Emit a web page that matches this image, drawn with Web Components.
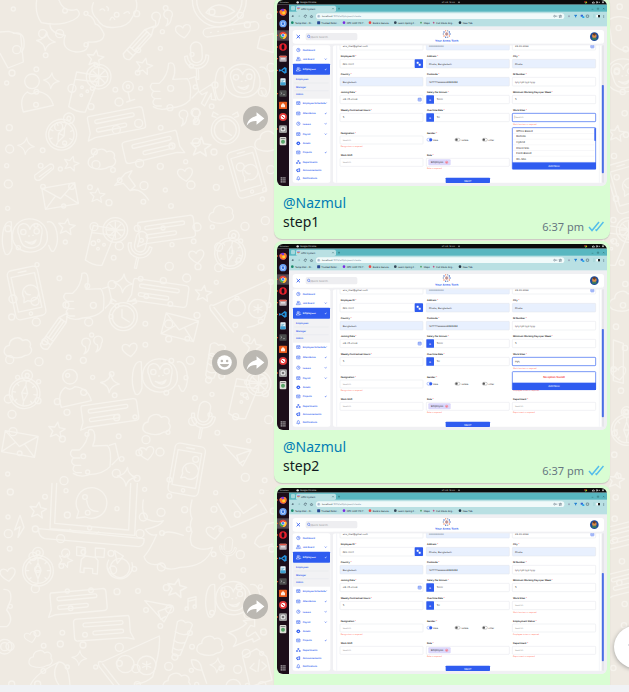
<!DOCTYPE html>
<html lang="en">
<head>
<meta charset="utf-8">
<meta name="viewport" content="width=device-width, initial-scale=1">
<title>Chat</title>
<style>
html, body { margin: 0; height: 100%; }
body { font-family: "Noto Sans", "Open Sans", sans-serif; color: #111b21; background: #efeae2; overflow: hidden; }
</style>
</head>
<body>
<chat-window>
  <chat-message time="6:37 pm" mention="@Nazmul" state="list">step1</chat-message>
  <chat-message time="6:37 pm" mention="@Nazmul" state="none" react>step2</chat-message>
  <chat-message mention="@Nazmul" state="closed"></chat-message>
</chat-window>

<script>
/* Wallpaper with line doodles */
class ChatWallpaper extends HTMLElement {
  constructor() {
    super();
    const C = (x, y, r) => `<circle cx="${x}" cy="${y}" r="${r}"/>`;
    const P = (d, x = 0, y = 0, r = 0, s = 1) => `<path transform="translate(${x} ${y}) rotate(${r}) scale(${s})" d="${d}"/>`;
    const G = (inner, x, y, r = 0, s = 1) => `<g transform="translate(${x} ${y}) rotate(${r}) scale(${s})">${inner}</g>`;
    const star = (x, y, r = 8, s = 1) => P('M0-24L7-8 25-7 11 5 16 22 0 13-16 22-11 5-25-7-7-8Z', x, y, r, s);
    const spark = (x, y, s = 1) => P('M0-28Q4-5 28 0Q4 5 0 28Q-4 5-28 0Q-4-5 0-28Z', x, y, 5, s);
    const heart = (x, y, r = -8, s = 1) => P('M0 20C-14 10-26 0-22-12C-18-22-4-20 0-10C4-20 18-22 22-12C26 0 14 10 0 20Z', x, y, r, s);
    const cloud = (x, y, s = 1) => P('M-32 28C-48 20-42-2-26-4C-26-26 4-34 14-18C28-26 42-14 36 0C48 12 34 28 22 26C8 36-10 36-32 28Z', x, y, 0, s);
    const quote = (x, y) => P('M-4 0a13 13 0 1 1 12-4c0 16-6 22-16 26c6-8 7-14 4-22M32-6a13 13 0 1 1 12-4c0 16-6 22-16 26c6-8 7-14 4-22', x, y);
    const talk = (x, y, r, f = 1) => `<g transform="translate(${x} ${y}) rotate(${r}) scale(${f} 1)"><path d="M-80-34H74Q84-34 84-24V22Q84 32 74 32H-72L-94 38L-84 16V-24Q-84-34-80-34Z"/><rect x="-64" y="-20" width="120" height="11" rx="5"/><rect x="-64" y="6" width="92" height="11" rx="5"/></g>`;
    const compass = (x, y, r = 0) => G(C(0, 0, 46) + C(0, 0, 38) + C(0, -54, 16) + C(0, -54, 6) + '<path d="M0-24L9 0 0 24-9 0ZM-9 0H9M0-36v8M0 28v8M-36 0h8M28 0h8M-26-26l5 5M21 21l5 5M26-26l-5 5M-21 21l-5 5"/>', x, y, r);
    const mic = (x, y, r = 0, s = 1) => G('<rect x="-17" y="-46" width="34" height="62" rx="17"/><path d="M-36-4C-36 46 36 46 36-4l-8-2C28 34-28 34-28-6ZM-3 34V66h6V34"/>', x, y, r, s);
    const phone = (x, y, r, s = 1) => G('<rect x="-46" y="-76" width="92" height="150" rx="14"/><path d="M-36-56H36V50H-36ZM-12-66H12M-14 26l4-14a24 24 0 1 1 9 10ZM-4-8q2 14 14 14"/>' + C(0, 62, 5), x, y, r, s);
    const thumb = (x, y) => P('M-22 0Q4-22 6-60Q22-66 24-46Q26-28 18-12L62-14Q76 0 70 50Q50 72 8 74Q-20 84-40 70M-22 0H-44Q-56 14-38 24H-20M-40 24Q-52 38-36 46H-18M-36 46Q-48 60-32 68H-16M68-14l18-6 10 44-20 20', x, y);
    const clock = (x, y) => C(x, y, 42) + C(x, y, 33) + P('M-4-22V2L18 16M-28-38l-12-4 4-12 14 8M28-38l12-4-4-12-14 8', x, y);
    const monkey = (x, y) => G('<path d="M-52 18C-62-60 50-64 52 8C58 64-38 76-52 18Z"/><path d="M-36-2C-42-36-4-36 0-12C4-36 42-36 36 0C30 18 40 40 4 44C-32 42-26 18-36-2Z"/><path d="M-14 24Q4 32 18 20Q10 42-14 24M-56-34C-84-44-90 30-74 62Q-62 70-54 44ZM52-34C80-44 92 24 72 52Q64 60 56 36M-4 8h2M8 6h2"/>' + C(-20, -4, 8) + C(20, -6, 8), x, y);
    const drink = (x, y) => G('<path d="M-20-44L50-32 6 76Q-18 78-44 60ZM-24-22L44-14"/>' + C(46, -30, 37) + C(46, -30, 28) + '<path d="M46-54v48M22-30h48M29-47l34 34M63-47l-34 34"/>' + C(-4, 2, 4) + C(12, 14, 4) + C(-6, 26, 4), x, y);
    const pizza = (x, y) => G('<path d="M-88 30Q-96 10-80 16L92-62Q96-20 72 60Q54 78 22 82M-88 30L-40 92M-78 22L-20 96"/>' + C(-10, 22, 26) + C(54, 26, 28) + '<path d="M54 14v24M42 20l24 12M66 20L42 32"/>', x, y);
    const laptop = (x, y) => G('<path d="M-104-90L-110 46L144 66L152-90M-90-90L-96 30L126 50L132-90M-144 46L172 76Q174 98 156 100L-126 76Q-146 70-144 46M-50 48l8 8 70 6 8-6"/><path d="M-30 14l6-20a46 46 0 1 1 20 17ZM0-40q4 36 34 34"/>', x, y);
    const carrot = (x, y, r) => G('<path d="M-30-40Q-20-54-6-44Q6-54 16-44L6 54Q-10 66-20 52ZM-28-10Q-6-2 10-14M-25 16Q-8 24 8 14M-22 38Q-8 46 6 36"/>' + C(-8, 64, 9), x, y, r);
    const plane = (x, y) => P('M-40-26L44-10 18 38-40-26M0 6l44-16M0 6l8 24 14-8', x, y);
    const envelope = (x, y, r) => P('M-50-30H50V34H-50ZM-50-30L0 10 50-30M-50 34L-14 0M50 34L14 0', x, y, r);
    const person = (x, y) => C(x, y, 22) + P('M-26 92Q-40 50-14 32Q0 44 14 30Q54 34 64 72Z', x, y);
    const pencil = (x, y, r) => P('M-12-44L0-68 12-44V44Q0 56-12 44ZM-12-44H12M-12 30H12M-12 18H12M-4-44V18M5-44V18', x, y, r, 1.1);
    const motifs = [
      P('M110 0Q104 40 124 68Q180 80 220 60Q250 44 230 28Q190 40 176-2M150 70Q148 100 196 106Q180 148 228 156Q270 156 264 126Q312 130 312 102Q300 74 286 72Q280 50 266 46'),
      P('M280 8Q268 36 292 58Q306 86 344 82Q384 82 398 50Q416 26 408 0M300 30q10-8 14 2M330 60q6-16 14-2M372 40q14-10 16 0M320 20q8 4 4 12'),
      C(658, 0, 81), C(658, 0, 68), P('M618 38Q650-6 704 34Q660 64 618 38'),
      P('M0 96L26 94 62 104 70 186 24 204 0 160M40 100Q70 94 72 124Q74 150 64 156'),
      G('<rect x="-84" y="-13" width="168" height="26" rx="13"/><path d="M-62 1h2M-40 1h2M-18 1h2M4 1h2"/>', 693, 88, -8),
      pencil(412, 134, 42), quote(470, 62), heart(550, 94), star(286, 174), star(432, 198, 14), spark(138, 124), spark(154, 242, .85),
      mic(590, 172, -3), drink(250, 260), person(96, 244), C(384, 260, 16), C(384, 260, 5), P('M384 276l6 26-10 4 24-8'),
      thumb(500, 250), P('M598 276L636 252 648 300 634 298 634 280 614 318 604 310 622 276 606 284Z'), monkey(728, 236), compass(184, 404, 25),
      talk(350, 368, -11), talk(454, 442, -13, -1), cloud(306, 474), quote(552, 356), clock(676, 390), star(602, 440, 5, 1.2), star(214, 490, 15, .9), spark(78, 438, .9),
      P('M104 526L150 492Q164 492 160 506L120 540Q104 544 104 530M118 530L154 504'), heart(556, 524), phone(740, 518, -16, .95), envelope(180, 586, -10), star(292, 586, 5, .9),
      P('M344 556L376 520 396 512 386 530 406 558 390 572 370 550ZM390 572Q420 560 446 600'), cloud(806, 420), P('M780 110L820 100V158L772 144Z'),
      monkey(90, 700), talk(500, 690, -8), cloud(664, 640, .9), drink(300, 720), mic(420, 740, 12), star(200, 680), heart(590, 770), compass(690, 760, 12),
      phone(80, 880, -12), thumb(240, 880), spark(370, 850), talk(480, 880, 8), star(610, 880), pizza(720, 900), clock(370, 950), envelope(540, 980, 14),
      pencil(160, 1000, 35), cloud(54, 1040), quote(260, 1040), heart(390, 1050), monkey(480, 1120), carrot(650, 1080, 15), star(760, 1040), person(210, 1130),
      compass(74, 1180, 8), spark(330, 1150), talk(330, 1240, -8), mic(610, 1250, 10), drink(730, 1180), star(170, 1290), cloud(470, 1270), envelope(60, 1330, 10),
      thumb(260, 1350), heart(440, 1360), phone(560, 1410, 10), plane(710, 1360), spark(380, 1430), P('M44 1590L60 1546 72 1582 54 1612 60 1580Z'), star(114, 1530, 8),
      laptop(260, 1540), P('M430 1500Q424 1530 436 1556Q470 1570 490 1562Q480 1580 436 1588Q450 1610 470 1604Q450 1650 432 1670Q440 1700 480 1692Q500 1716 540 1702Q620 1700 638 1642Q600 1656 576 1636M490 1606Q490 1586 550 1606M576 1636q-10-20 0-40q-10-20 0-40q-10-20 0-56'),
      P('M652 1510L692 1582 802 1536 780 1500M700 1500l30 40 40-26'), heart(642, 1598), mic(684, 1644, 6, .7), P('M764 1630Q768 1610 784 1604L800 1572 830 1566M764 1630l14 12 40-10'),
      compass(114, 1712), star(196, 1680, 20, .85), P('M230 1640l26 4-2 24-24-2ZM286 1644l28 2-2 26-26-2ZM256 1668l30 4 8 10-2 40-14-2v-14l-26-2v14l-12-2 4-38Z'),
      C(360, 1704, 29), P('M344 1652L370 1668 352 1690ZM326 1680A38 38 0 1 0 396 1688'), star(530, 1764, 12, 1.15), talk(236, 1806, -5), talk(306, 1886, -4, -1), plane(474, 1828),
      P('M564 1824V1796L588 1790V1820M564 1804L588 1798'), C(560, 1826, 5), C(584, 1820, 5), monkey(700, 1788), carrot(550, 1912, 16), cloud(630, 1934, .95), heart(24, 1724), heart(92, 1912, -15, .8),
      P('M684 1898Q720 1890 740 1870L730 1862 764 1858V1880L752 1876Q730 1904 744 1910L766 1896 780 1916 760 1926 758 1916Q722 1930 700 1940Q724 1912 684 1898'),
      pizza(386, 1970), cloud(122, 1974, .85), spark(238, 1974, .8), spark(652, 1996, .8), P('M574 1980Q600 1974 606 2010L620 2050M574 1980Q578 2014 606 2010'), P('M728 1970L770 1946 800 1970 816 2040 750 2060ZM762 1990l-12 14 18 10M786 1986l14 12-14 12M778 1980l-4 34'),
      P('M90 2060Q100 2024 176 1986Q206 1984 210 2060M176 1986Q150 2020 180 2060'), C(14, 1940, 12), C(14, 1940, 22), P('M12 1768Q36 1766 32 1800L20 1830Q44 1860 20 1880H0'), cloud(530, 2046), C(700, 2060, 22),
      P('M1826 60q30-20 70 0v90q-30 10-60-20Z'), monkey(1870, 220), star(1850, 400), phone(1880, 560, -16), drink(1840, 720), cloud(1870, 900), P('M1840 1020l30 10v120l-30-8Z'), heart(1856, 1120), compass(1880, 1290), star(1848, 1440), talk(1890, 1600, -14), talk(1900, 1740, -14)
    ];
    let seed = 11, dots = '';
    const rnd = () => (seed = (seed * 16807) % 2147483647) / 2147483647;
    for (let y = 16; y < 2070; y += 58) for (let x = 20; x < 830; x += 76)
      if (rnd() < .72) dots += C(Math.round(x + rnd() * 44), Math.round(y + rnd() * 34), [6, 7, 9, 12][Math.floor(rnd() * 4)]);
    for (let y = 20; y < 2070; y += 64) dots += C(Math.round(1838 + rnd() * 40), y, 8);
    this.attachShadow({ mode: 'open' }).innerHTML = `<style>:host{display:block;overflow:hidden;background:#efeae2}svg{display:block;width:100%;height:100%}</style>
    <svg viewBox="0 0 1887 2076" preserveAspectRatio="xMinYMin slice" aria-hidden="true" fill="none" stroke="#f6f3ed" stroke-width="4" stroke-linecap="round" stroke-linejoin="round">${dots}${motifs.join('')}</svg>`;
  }
}
customElements.define('chat-wallpaper', ChatWallpaper);

/* Photo attachment: a desktop with a browser showing an employee form */
class ScreenPhoto extends HTMLElement {
  connectedCallback() {
    const state = this.getAttribute('state');
    const B = '#2f5cf0';
    const R = (x, y, x2, y2, fill, rx = 0, extra = '') => `<rect x="${x}" y="${y}" width="${x2 - x}" height="${y2 - y}" rx="${rx}" fill="${fill}" ${extra}/>`;
    const T = (x, y, s, size = 14, fill = '#333', w = 400, a = 'start') => `<text x="${x}" y="${y + Math.round(size * .36)}" font-size="${size}" fill="${fill}" font-weight="${w}" text-anchor="${a}">${s}</text>`;
    const O = (x, y, r, fill) => `<circle cx="${x}" cy="${y}" r="${r}" fill="${fill}"/>`;
    const L = (d, c = B, w = 3) => `<path d="${d}" fill="none" stroke="${c}" stroke-width="${w}"/>`;
    const c1 = [378, 876], c2 = [896, 1394], c3 = [1412, 1912];
    const label = (c, y, s, req = true) => T(c[0] + 4, y, s + (req ? '<tspan fill="#f33"> *</tspan>' : ''), 14, '#111', 600);
    const box = (c, y, y2, s = '', blue = false, col = '#333') => R(c[0], y, c[1], y2, blue ? '#e8f0fe' : '#fff', 4, 'stroke="#e3e5ea" stroke-width="3"') + T(c[0] + 16, (y + y2) / 2, s, 15, col);
    const err = (c, y, s) => T(c[0] + 4, y, s, 12, '#ff6a55');
    const cal = (x, y) => R(x - 9, y - 8, x + 9, y + 9, '#fff', 2, `stroke="${B}" stroke-width="3"`) + L(`M${x - 9} ${y - 3}h18M${x - 5} ${y + 3}h10`);
    const euro = y => R(896, y, 942, y + 52, B, 4) + T(919, y + 26, '£', 16, '#fff', 400, 'middle');
    let s = R(0, 0, 1980, 1116, '#f0f0f3');
    // desktop bar
    s += R(0, 0, 1980, 28, '#0b0b0b') + T(16, 14, 'Activities', 12, '#ccc', 500) + O(124, 14, 7, '#ddd') + T(138, 14, 'Google Chrome', 13, '#ccc', 500)
      + T(988, 14, '27-05 &nbsp;18:00', 13, '#ccc', 500) + O(1092, 14, 5, '#999') + O(1848, 12, 5, '#e33') + O(1856, 14, 5, '#fb0') + O(1852, 18, 5, '#3a5')
      + L('M1890 18l8-8 8 8ZM1918 9v10l8-5ZM1930 14h8', '#ddd', 4) + O(1956, 14, 6, '#bbb');
    // browser
    s += R(72, 28, 1980, 72, '#58b7c0') + R(72, 70, 1980, 158, '#b9e0e3') + R(84, 36, 108, 62, '#a5d8dc', 6) + R(114, 34, 354, 72, '#b9e0e3', 10)
      + L('M122 47l6 8 8-8', '#f60', 5) + L('M122 47h14', '#64f', 4) + T(144, 52, 'HRM System', 14, '#234') + L('M332 48l8 8M340 48l-8 8M372 46v12M366 52h12', '#255', 2)
      + L('M1888 56h10M1922 48h8v8h-8ZM1956 48l8 8M1964 48l-8 8', '#255', 2)
      + R(234, 80, 1724, 114, '#f1fafa', 17) + L('M90 97h12M90 97l5-5M90 97l5 5', '#234', 3) + L('M126 97h12M138 97l-5-5M138 97l-5 5', '#8bb', 3) + L('M176 94a7 7 0 1 0 0 7M176 90v5h-5M200 98l7-7 7 7M202 97v7h10v-7', '#345', 3)
      + `<circle cx="250" cy="97" r="9" fill="#cde"/>` + L('M245 94h10M245 100h10', '#567', 2) + T(270, 97, 'localhost<tspan fill="#789">:5173/employees/create</tspan>', 15, '#233')
      + L('M1660 97a5 5 0 1 0 10 0a5 5 0 1 0-10 0M1670 97h12M1700 89l2 6h7l-6 4 2 7-5-4-6 4 2-7-5-4h7Z', '#567', 3)
      + O(1752, 97, 6, '#9ab') + L('M1784 92h16M1792 92v12', '#1a7bd0', 6) + R(1822, 88, 1836, 100, '#3567d8', 2) + R(1832, 98, 1844, 108, '#20a4ea', 2) + R(1856, 90, 1870, 104, 'none', 3, 'stroke="#345" stroke-width="3"') + L('M1902 86v22', '#7bb', 2) + R(1916, 90, 1926, 104, '#fff') + R(1926, 90, 1938, 104, '#222') + L('M1960 90v3M1960 97v3M1960 104v3', '#234', 4);
    [[92, 'Temp Mail - Di…', '#1b8a6b'], [250, 'Trusted Dollar…', '#2a4a94'], [402, 'CPC USD 178.7…', '#7b2be0'], [558, 'Build a Secure…', '#f04545'], [710, 'Learn Spring F…', '#345'], [864, 'Maps', '#4a9b5e'], [940, 'Full Stack Ang…', '#b58'], [1098, 'New Tab', '#234']]
      .forEach(([x, t, c], i) => { s += (i % 2 && i < 3 ? R(x - 9, 127, x + 9, 145, c, 3) : O(x, 136, i === 5 || i === 6 ? 5 : 8, c)) + T(x + 16, 136, t, 14, '#123'); });
    // dock
    s += R(0, 28, 72, 1116, '#1c0d19');
    s += O(36, 74, 21, '#7a35d8') + `<path d="M14 66Q16 92 38 95Q60 90 58 66Q54 52 40 54Q48 68 38 70Q28 68 26 58Z" fill="#ff7b22"/>` + O(40, 76, 9, '#ffd13a');
    s += O(36, 142, 22, '#6aa1f3') + O(36, 142, 12, '#e3edfd') + O(36, 142, 8, '#3170de');
    s += R(0, 182, 72, 244, '#554b53') + O(36, 212, 22, '#e94235') + '<path d="M17 202A22 22 0 0 0 34 234L42 214 24 212Z" fill="#35a853"/><path d="M34 234A22 22 0 0 0 56 203L38 204 44 216Z" fill="#fcc934"/>' + O(36, 212, 11, '#fff') + O(36, 212, 8, '#4285f4');
    s += O(36, 282, 23, '#e8202c') + '<ellipse cx="36" cy="282" rx="9" ry="16" fill="#1c0d19"/>';
    s += R(14, 334, 58, 370, '#b8aeb5', 4) + R(14, 334, 58, 344, '#e25a4a', 4) + R(24, 350, 48, 356, '#f5f2f5');
    s += '<path d="M46 402L58 408V436L46 442 24 424 16 430 12 426V418L16 414 24 420ZM46 414L32 422 46 430Z" fill="#2591db" fill-rule="evenodd"/>';
    s += R(20, 470, 52, 512, '#eaf6fc', 4) + R(20, 494, 52, 512, '#3f9ed0', 4) + L('M26 482h18M26 490h12', '#4798ba', 4);
    s += R(14, 542, 58, 580, '#4a4b4c', 4) + L('M22 554l8 6-8 6M36 568h12', '#ccc', 3);
    s += R(12, 610, 60, 654, '#e85b1c', 5) + '<path d="M24 644V630L36 618 48 630V644Z" fill="#ffe9de"/>';
    s += O(36, 702, 24, '#e23838') + O(36, 702, 14, '#fff') + L('M26 694L46 710', '#d22', 6);
    s += R(12, 752, 60, 798, '#9b9b9b', 8) + O(36, 774, 15, '#e4e4e4') + O(36, 774, 8, '#777');
    s += R(16, 822, 56, 872, '#dfdfd8', 6) + O(36, 850, 12, '#5aa56a') + R(22, 828, 50, 834, '#888');
    [1064, 1076, 1088].forEach(y => [22, 33, 44].forEach(x => s += R(x, y, x + 7, y + 7, '#ddd')));
    [72, 212, 282, 352, 422, 562, 774].forEach(y => s += O(3, y, 4, '#e9542a'));
    // page header
    s += R(94, 180, 1962, 262, '#fff', 16) + L('M118 210l20 20M138 210l-20 20', B, 5) + R(172, 198, 482, 242, '#eeeef1', 10) + `<circle cx="190" cy="218" r="7" fill="none" stroke="${B}" stroke-width="3"/>` + L('M195 223l6 6') + T(204, 220, 'Quick Search...', 16, '#999');
    for (let i = 0; i < 10; i++) { const a = i * Math.PI / 5; s += O(Math.round(1018 + 20 * Math.cos(a)), Math.round(204 + 20 * Math.sin(a)), 4, ['#2a5cc0', '#f27a4c', '#7d8fae'][i % 3]); }
    s += O(1018, 204, 10, '#eba58e') + L('M1008 204h20M1018 194v20', '#5b7bb8', 2) + T(1018, 244, 'Your Arms Tech', 18, B, 700, 'middle');
    s += O(1904, 220, 26, '#1c4a9a') + O(1904, 216, 14, '#d98c4a') + R(1890, 226, 1918, 238, '#3f7d58', 6) + O(1904, 206, 8, '#6c3b20');
    // sidebar
    s += R(94, 272, 320, 1096, '#fff', 12) + R(96, 448, 318, 592, '#f2f2f4') + R(96, 382, 318, 448, B, 4) + L('M104 498h206M104 544h206', '#dfe0e6', 2);
    const chev = (y, c = B) => L(`M287 ${y - 2}l5 5 5-5`, c, 4);
    const glyph = {
      ring: y => `<circle cx="128" cy="${y}" r="10" fill="none" stroke="${B}" stroke-width="3"/>` + L(`M128 ${y - 7}v8h7`),
      team: (y, c = B) => L(`M116 ${y + 10}q1-11 10-11t10 11ZM121 ${y - 6}a5 5 0 1 0 10 0a5 5 0 1 0-10 0M134 ${y - 10}q8 4 2 9M138 ${y + 2}q5 2 5 8`, c),
      box: y => L(`M118 ${y - 8}h20v17h-20ZM118 ${y - 2}h20M124 ${y + 3}h8`),
      cog: y => O(128, y, 11, B) + O(128, y, 4, '#fff'),
      org: y => R(123, y - 10, 133, y - 2, B) + R(115, y + 2, 125, y + 10, B) + R(131, y + 2, 141, y + 10, B),
      horn: y => L(`M118 ${y - 4}l18-6v17l-18-4ZM122 ${y + 4}l3 7`, B, 5),
      bell: y => L(`M118 ${y + 6}q4-4 4-9q0-8 6-8t6 8q0 5 4 9ZM125 ${y + 10}h6`)
    };
    [['Dashboard', 300, 'ring'], ['Job Board', 354, 'team', 1], ['Employee Schedule', 618, 'box', 1], ['Attendance', 680, 'box', 1], ['Leaves', 742, 'ring', 1], ['Payroll', 804, 'box', 1], ['Assets', 860, 'cog'], ['Projects', 914, 'box', 1], ['Departments', 972, 'org'], ['Announcements', 1022, 'horn'], ['Notifications', 1070, 'bell']]
      .forEach(([t, y, g, c]) => s += glyph[g](y) + T(154, y, t, 14, B, 600) + (c ? chev(y) : ''));
    s += glyph.team(416, '#fff') + T(154, 416, 'Employees', 15, '#fff', 600) + chev(416, '#fff') + T(114, 474, 'Employees', 14, B, 600) + T(114, 520, 'Manager', 14, B, 600) + T(114, 566, 'Admin', 14, B, 600);
    // form
    s += R(336, 272, 1958, 1096, '#fff', 12) + L('M358 272V1096M1934 272V1096', '#e9ebf3', 3) + R(1948, 272, 1962, 1096, '#e6e6ea') + R(1949, 510, 1961, 1040, '#4a6fe6', 5);
    s += R(378, 264, 876, 300, '#fff', 4, 'stroke="#e3e5ea" stroke-width="3"') + R(896, 264, 1394, 300, '#e8f0fe', 4, 'stroke="#dfe5f2" stroke-width="3"') + R(1412, 264, 1912, 300, '#fff', 4, 'stroke="#e3e5ea" stroke-width="3"')
      + T(394, 278, 'ariz_mail@gmail.com', 15) + T(912, 278, '0000000000', 14, '#678') + T(1428, 278, '29-05-2024', 14) + cal(1892, 278) + R(336, 255, 1946, 272, '#f0f0f3') + R(336, 250, 1946, 262, '#fff');
    s += label(c1, 338, 'Employee ID') + box(c1, 356, 408, 'INV-0001') + R(826, 356, 876, 408, B, 4) + R(838, 370, 850, 382, '#fff', 2) + R(850, 382, 862, 394, '#fff', 2) + label(c2, 338, 'Address') + box(c2, 356, 408, 'Dhaka, Bangladesh', true) + label(c3, 338, 'City') + box(c3, 356, 408, 'Dhaka', true);
    s += label(c1, 446, 'Country') + box(c1, 464, 516, 'Bangladesh', true) + label(c2, 446, 'Postcode') + box(c2, 464, 516, '1477778888889999999', true) + label(c3, 446, 'NI Number') + box(c3, 464, 516, 'tyty tytt tyyt tyyy');
    s += label(c1, 552, 'Joining Date') + box(c1, 572, 622, '29-05-2024') + cal(856, 597) + label(c2, 552, 'Salary Per Annum') + box(c2, 572, 622) + euro(571) + T(958, 597, '5000', 15) + label(c3, 552, 'Minimum Working Days per Week') + box(c3, 572, 622, '5');
    s += label(c1, 660, 'Weekly Contractual Hours') + box(c1, 680, 730, '5') + label(c2, 660, 'Overtime Rate') + box(c2, 680, 730) + euro(679) + T(958, 705, '50', 15) + label(c3, 660, 'Work Sites');
    s += label(c1, 796, 'Designation') + box(c1, 816, 864, 'Search', false, '#999') + err(c1, 878, 'Designation is required') + label(c2, 796, 'Gender');
    [[900, 'Male'], [1068, 'Female'], [1232, 'Other']].forEach(([x, t], i) => s += R(x, 830, x + 30, 847, '#fff', 8, `stroke="${i ? '#777' : B}" stroke-width="2"`) + (i ? O(x + 9, 838, 7, '#555') : O(x + 22, 838, 9, B)) + T(x + 36, 838, t, 13));
    s += label(c1, 930, 'Work Shift', false) + box(c1, 950, 998, 'Search', false, '#999') + label(c2, 930, 'Role') + box(c2, 950, 998) + R(908, 956, 1042, 992, '#dcd8fb', 6) + T(924, 974, 'Employee', 16) + `<circle cx="1018" cy="974" r="7" fill="#f9b9c4" stroke="#f05270" stroke-width="2"/>` + L('M1015 971l6 6M1021 971l-6 6', '#e23350', 2) + err(c2, 1010, 'Role is required');
    s += R(1012, 1066, 1278, 1098, B, 4) + T(1145, 1088, 'NEXT', 16, '#fff', 400, 'middle');
    const dept = label(c3, 930, 'Department') + box(c3, 950, 998, 'Search', false, '#999') + err(c3, 1010, 'Department is required');
    const focus = `stroke="#5d83f3" stroke-width="5"`;
    s += err(c3, 744, 'Work location is required');
    if (state === 'closed') s += box(c3, 680, 730, 'Search', false, '#999') + label(c3, 796, 'Employment Status') + box(c3, 816, 864, 'Search', false, '#999') + err(c3, 876, 'Employee status is required') + dept;
    else s += R(1412, 680, 1912, 730, '#fff', 4, focus);
    if (state === 'list') {
      s += T(1424, 705, '|<tspan fill="#999">Search</tspan>', 15) + R(1412, 766, 1912, 1014, '#fff', 4, focus);
      ['Office Based', 'Remote', 'Hybrid', 'Client Site', 'Field-Based', 'On-Site'].forEach((t, i) => s += T(1436, 784 + i * 34, t, 16, '#222') + L(`M1416 ${801 + i * 34}h488`, '#e8e8ec', 2));
      s += R(1904, 768, 1913, 846, B, 4) + R(1412, 974, 1914, 1016, B) + T(1662, 994, 'Add New', 16, '#fff', 400, 'middle');
    }
    if (state === 'none') s += T(1428, 705, '<tspan text-decoration="underline">ppp</tspan>', 15) + err(c3, 880, 'Employee status is required') + R(1412, 766, 1912, 874, '#fff', 4, focus) + T(1662, 800, 'No option found!', 16, '#f21d1d', 600, 'middle') + R(1412, 832, 1914, 876, B) + T(1662, 853, 'Add New', 16, '#fff', 400, 'middle') + dept;
    s += R(72, 1098, 1980, 1116, '#f0f0f3');
    this.attachShadow({ mode: 'open' }).innerHTML = `<style>:host{display:block;overflow:hidden;border-radius:6px}svg{display:block;width:100%;height:auto;font-family:Inter,"Noto Sans",sans-serif;text-rendering:geometricPrecision}</style>
    <svg viewBox="0 0 1980 1116" role="img" aria-label="Screenshot of an employee form">${s}</svg>`;
  }
}
customElements.define('screen-photo', ScreenPhoto);

/* Round grey action beside a bubble */
class RoundAction extends HTMLElement {
  connectedCallback() {
    const smile = this.getAttribute('kind') === 'react';
    const icon = smile
      ? '<circle cx="12" cy="12" r="7" fill="#fff"/><circle cx="9.500" cy="10.500" r="1.200" fill="#bbb8b2"/><circle cx="14.500" cy="10.500" r="1.200" fill="#bbb8b2"/><path d="M7.500 13.500H16.500Q15.500 16.500 12 16.500T7.500 13.500Z" fill="#bbb8b2"/>'
      : '<path fill="#fff" d="M13 6L20.500 12 13 18V14.500C9 14.300 6 15.500 3.500 19C4.500 14 7.500 10.500 13 9.700Z"/>';
    this.attachShadow({ mode: 'open' }).innerHTML = `<style>:host{display:block}button{display:block;width:25px;height:25px;padding:0;border:0;border-radius:50%;background:#bbb8b2}svg{display:block;width:100%;height:100%}</style>
    <button type="button" aria-label="${smile ? 'React' : 'Forward'}"><svg viewBox="0 0 24 24">${icon}</svg></button>`;
  }
}
customElements.define('round-action', RoundAction);

class ChatMessage extends HTMLElement {
  connectedCallback() {
    const a = n => this.getAttribute(n);
    this.attachShadow({ mode: 'open' }).innerHTML = `<style>
    :host{display:flex;flex:none;justify-content:flex-end;align-items:center;gap:6px;padding-right:19px}
    .bubble{box-sizing:border-box;width:336px;padding:3px;border-radius:8px;background:#d9fdd3;box-shadow:0 1px 1px rgba(11,20,26,.16)}
    .row{display:flex;align-items:flex-end;justify-content:space-between;padding:7px 3px 5px 6px}
    p{margin:0;font-size:14px;line-height:19px;min-height:38px}
    a{color:#027eb5;text-decoration:none;display:block}
    .meta{display:flex;align-items:center;gap:4px;font-size:11px;line-height:15px;color:#667781;margin-bottom:-3px}
    svg{display:block;width:16px;height:11px}
    </style>
    ${this.hasAttribute('react') ? '<round-action kind="react"></round-action>' : ''}
    <round-action kind="forward"></round-action>
    <div class="bubble"><screen-photo state="${a('state')}"></screen-photo>
      <div class="row"><p><a href="#profile">${a('mention')}</a><slot></slot></p>
      ${a('time') ? `<span class="meta"><time>${a('time')}</time><svg viewBox="0 0 16 11" fill="none" stroke="#53bdeb" stroke-width="1.500" aria-label="Read"><path d="M1 6L4 9.500 11 1M7.500 8.500L8.500 9.500 15.500 1"/></svg></span>` : ''}</div>
    </div>`;
  }
}
customElements.define('chat-message', ChatMessage);

class ChatWindow extends HTMLElement {
  constructor() {
    super();
    this.attachShadow({ mode: 'open' }).innerHTML = `<style>
    :host{display:flex;flex-direction:column;height:100vh}
    main{position:relative;flex:1;min-height:0;overflow:hidden}
    chat-wallpaper{position:absolute;inset:0}
    .list{position:relative;display:flex;flex-direction:column;gap:2px;margin-top:-3px}
    .down{position:absolute;right:-27px;bottom:17px;width:42px;height:42px;border:0;padding:0;border-radius:50%;background:#fff;box-shadow:0 1px 4px rgba(11,20,26,.35);display:grid;place-items:center}
    .down svg{width:14px;height:14px}
    footer{flex:none;height:7px;background:#f0f2f5}
    </style>
    <main><chat-wallpaper></chat-wallpaper><div class="list"><slot></slot></div>
    <button class="down" type="button" aria-label="Scroll to bottom"><svg viewBox="0 0 16 16" fill="none" stroke="#8696a0" stroke-width="2"><path d="M1 5L8 12 15 5"/></svg></button></main>
    <footer></footer>`;
  }
}
customElements.define('chat-window', ChatWindow);
</script>
</body>
</html>
